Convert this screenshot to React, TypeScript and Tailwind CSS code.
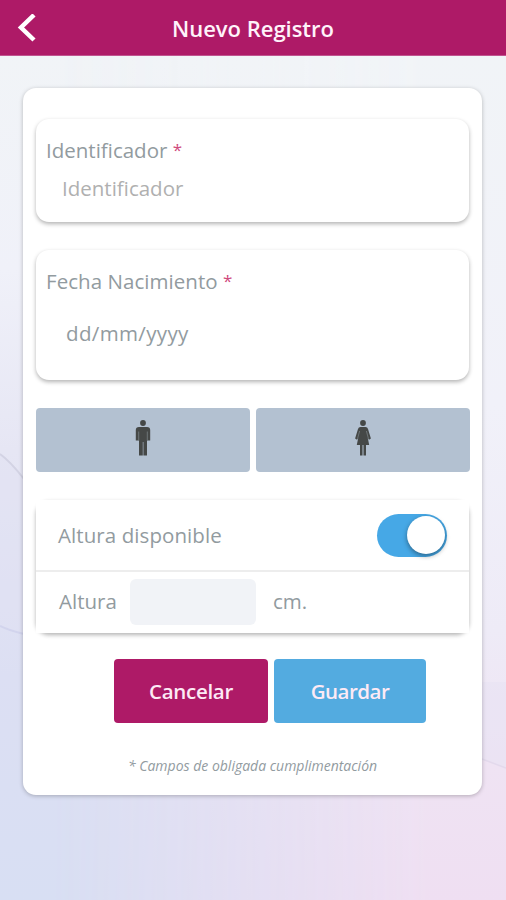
import React from 'react';

const Background: React.FC = () => (
  <svg className="absolute inset-0 h-full w-full" viewBox="0 0 506 900" preserveAspectRatio="none">
    <defs>
      <linearGradient id="left" x1="0" y1="0" x2="0" y2="1">
        <stop offset="0.06" stopColor="#f1f4f7" />
        <stop offset="0.3" stopColor="#f0f1f9" />
        <stop offset="0.5" stopColor="#e6e6f4" />
        <stop offset="0.75" stopColor="#dcdff3" />
        <stop offset="1" stopColor="#d8dff3" />
      </linearGradient>
      <linearGradient id="right" x1="0" y1="0" x2="0" y2="1">
        <stop offset="0.06" stopColor="#f1f4f7" />
        <stop offset="0.45" stopColor="#f1f1f9" />
        <stop offset="0.7" stopColor="#eeebf7" />
        <stop offset="0.85" stopColor="#efe3f3" />
        <stop offset="1" stopColor="#efdff2" />
      </linearGradient>
      <linearGradient id="blend" x1="0" y1="0" x2="506" y2="0" gradientUnits="userSpaceOnUse">
        <stop offset="0.1" stopColor="#000" />
        <stop offset="0.85" stopColor="#fff" />
      </linearGradient>
      <mask id="blendMask">
        <rect width="506" height="900" fill="url(#blend)" />
      </mask>
    </defs>
    <rect width="506" height="900" fill="url(#left)" />
    <rect width="506" height="900" fill="url(#right)" mask="url(#blendMask)" />
    <path d="M482 682H506V768L482 759Z" fill="#e8e2f3" opacity="0.6" />
    <path d="M482 759L506 768" stroke="#e3d9ec" strokeWidth="1.500" />
    <path d="M0 454Q10 461 24 479V634Q10 631 0 626Z" fill="#e0e0f2" opacity="0.4" />
    <path d="M0 454Q10 461 24 479" fill="none" stroke="#d3d3e4" strokeWidth="2" />
    <path d="M0 626Q10 631 24 634" fill="none" stroke="#d2d4ed" strokeWidth="2" />
  </svg>
);

const ManIcon: React.FC = () => (
  <svg className="h-9 w-4" viewBox="0 0 16 36" fill="#454847">
    <circle cx="8" cy="3" r="2.9" />
    <path d="M4 7h8q3.200 0 3.200 3v10.500h-3.200v15H8.400V22h-.6v13.500H4v-15H.8V10q0-3 3.200-3z" />
    <path d="M3.700 11.500v9M12.300 11.500v9" stroke="#7f888d" strokeWidth="0.7" />
  </svg>
);

const WomanIcon: React.FC = () => (
  <svg className="h-9 w-4" viewBox="0 0 16 36" fill="#454847">
    <circle cx="8" cy="3" r="2.9" />
    <path d="M5.500 7h5q2 0 2.500 2l2.900 9.500-1.900 1.300-1.200-1.800 1.400 7h-3.200v10.500H8.500V25h-1v10.500H5V25H1.800l1.400-7L2 19.800.1 18.500 3 9q.5-2 2.500-2z" />
    <path d="M4.600 11L2.600 18.500M11.400 11l2 7.500" stroke="#7f888d" strokeWidth="0.7" />
  </svg>
);

const Required: React.FC = () => (
  <span className="inline-block -translate-y-0.5 text-[17px] text-[#cf4a7d]">*</span>
);

const App: React.FC = () => {
  return (
    <div className="relative h-[900px] w-full overflow-hidden font-['Open_Sans','Noto_Sans',sans-serif] text-[20.500px] text-[#929b9f]">
      <Background />

      <div className="relative">
        {/* Header */}
        <header className="grid h-14 grid-cols-[56px_1fr_56px] items-center border-b border-[#c0548f] bg-[#ae1a67]">
          <button className="flex pl-[17px]" aria-label="Volver">
            <svg className="h-7 w-5" viewBox="0 0 20 28" fill="none" stroke="#fff" strokeWidth="4.500">
              <path d="M17 1L4 13.500L17 26" />
            </svg>
          </button>
          <h1 className="pt-0.5 text-center text-[22px] font-semibold tracking-[-0.02px] text-[#fff3fa]">Nuevo Registro</h1>
        </header>

        {/* Form card */}
        <main className="mt-8 ml-[23px] h-[707px] w-[459px] rounded-[13px] bg-white px-[13px] pt-[31px] shadow-[0_1px_4px_rgba(0,0,0,0.25)]">
          <section className="h-[103px] rounded-[13px] bg-white px-2.5 pt-4 shadow-[0_2px_4px_rgba(0,0,0,0.3)]">
            <label className="block h-[30px] leading-[30px]">
              Identificador <Required />
            </label>
            <p className="mt-2 pl-4 leading-[30px] text-[#b0b0b0]">Identificador</p>
          </section>

          <section className="mt-7 h-[130px] rounded-[13px] bg-white px-2.5 pt-4 shadow-[0_2px_4px_rgba(0,0,0,0.3)]">
            <label className="block h-[30px] leading-[30px] tracking-[0.05px]">
              Fecha Nacimiento <Required />
            </label>
            <p className="mt-[22px] pl-5 leading-[30px] tracking-[0.35px]">dd/mm/yyyy</p>
          </section>

          <div className="mt-7 grid grid-cols-[214px_214px] gap-1.5">
            <button className="flex h-16 justify-center rounded bg-[#b3c1d1] pt-3" aria-label="Hombre">
              <ManIcon />
            </button>
            <button className="flex h-16 justify-center rounded bg-[#b3c1d1] pt-3" aria-label="Mujer">
              <WomanIcon />
            </button>
          </div>

          <section className="mt-7 h-[133px] rounded-[13px] shadow-[0_2px_4px_rgba(0,0,0,0.3)]">
            <div className="flex h-[72px] items-center justify-between border-b-2 border-[#ededed] bg-white pr-[22px] pl-[22px]">
              <span className="tracking-[0.08px]">Altura disponible</span>
              <button className="flex h-[43px] w-[70px] items-center justify-end rounded-full bg-[#46a8e6] p-0.5" aria-label="Altura disponible">
                <span className="h-[38px] w-[38px] rounded-full bg-white shadow-[0_2px_5px_rgba(0,0,0,0.4)]" />
              </button>
            </div>
            <div className="flex h-[61px] items-center bg-white pb-0.5 pl-[23px]">
              <span className="w-[71px]">Altura</span>
              <div className="h-[46px] w-[126px] rounded-md bg-[#f1f3f7]" />
              <span className="ml-[17px]">cm.</span>
            </div>
          </section>

          <div className="mt-[26px] flex gap-1.5 pl-[78px] font-semibold tracking-[-0.3px] text-[#fdeaf5]">
            <button className="h-16 w-[154px] rounded bg-[#ae1a67]">Cancelar</button>
            <button className="h-16 w-[152px] rounded bg-[#53abe0] tracking-[-0.5px]">Guardar</button>
          </div>

          <p className="mt-[33px] text-center text-sm leading-5 italic">* Campos de obligada cumplimentación</p>
        </main>
      </div>
    </div>
  );
};

export default App;
